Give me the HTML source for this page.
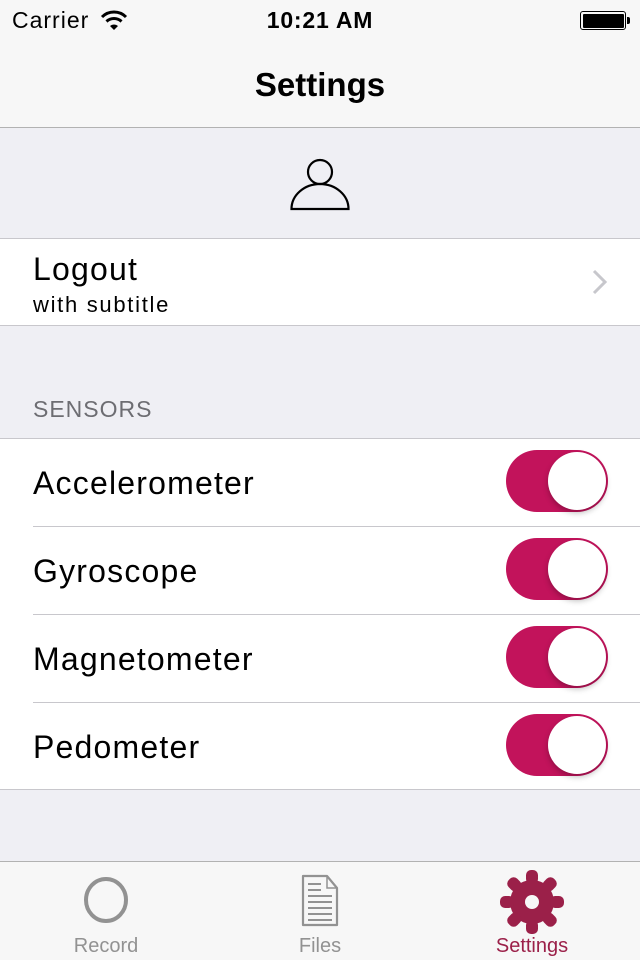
<!DOCTYPE html>
<html><head><meta charset="utf-8"><style>
*{margin:0;padding:0;box-sizing:border-box}
body{width:640px;height:960px;background:#efeff4;font-family:"Liberation Sans",sans-serif;position:relative;overflow:hidden;color:#000}
.abs{position:absolute}
.nav{left:0;top:0;width:640px;height:128px;background:#f7f7f7;border-bottom:1px solid #b2b2b2}
.row{left:0;width:640px;background:#fff}
.lbl{position:absolute;left:33px;font-size:32px;letter-spacing:1.2px}
.sep{position:absolute;left:33px;right:0;height:1px;background:#c8c7cc}
.sw{position:absolute;left:506px;width:102px;height:62px;border-radius:31px;background:#c2135b}
.sw:after{content:"";position:absolute;right:2px;top:2px;width:58px;height:58px;border-radius:50%;background:#fff;box-shadow:0 3px 6px rgba(0,0,0,.25)}
</style></head><body>
<div class="abs nav"></div>
<div class="abs" style="left:12px;top:7px;font-size:23px;letter-spacing:1px">Carrier</div>
<svg class="abs" style="left:100px;top:10px" width="28" height="20" viewBox="0 0 28 20"><path d="M2 7 A17 17 0 0 1 26 7" stroke="#000" stroke-width="3" fill="none"/><path d="M6.5 11.5 A11 11 0 0 1 21.5 11.5" stroke="#000" stroke-width="3" fill="none"/><path d="M10 16 L14 20 L18 16 A6 6 0 0 0 10 16Z" fill="#000"/></svg>
<div class="abs" style="left:0;width:640px;text-align:center;top:7px;font-size:23px;font-weight:bold;letter-spacing:0.8px">10:21 AM</div>
<div class="abs" style="left:580px;top:11px;width:46px;height:19px;border:1.5px solid #000;border-radius:3px;padding:1.5px"><div style="width:100%;height:100%;background:#000;border-radius:1px"></div></div>
<div class="abs" style="left:627px;top:17px;width:3px;height:7px;background:#000;border-radius:0 2px 2px 0"></div>
<div class="abs" style="left:0;width:640px;text-align:center;top:66px;font-size:33px;font-weight:bold">Settings</div>

<svg class="abs" style="left:285px;top:150px" width="70" height="65" viewBox="285 150 70 65"><circle cx="320" cy="172" r="12" fill="none" stroke="#000" stroke-width="2.2"/><path d="M291.5 209 A28.5 25 0 0 1 348.5 209 Z" fill="none" stroke="#000" stroke-width="2.2"/></svg>

<div class="abs row" style="top:238px;height:88px;border-top:1px solid #c8c7cc;border-bottom:1px solid #c8c7cc">
<div class="lbl" style="top:12px;font-size:32px">Logout</div>
<div class="lbl" style="top:53px;font-size:22px;letter-spacing:1.7px">with subtitle</div>
<svg class="abs" style="left:592px;top:30px" width="16" height="26"><path d="M2 2 L13 13 L2 24" stroke="#c7c7cc" stroke-width="3" fill="none"/></svg>
</div>

<div class="abs" style="left:33px;top:396px;font-size:23px;color:#6d6d72;letter-spacing:1px">SENSORS</div>

<div class="abs row" style="top:438px;height:352px;border-top:1px solid #c8c7cc;border-bottom:1px solid #c8c7cc">
<div class="lbl" style="top:26px">Accelerometer</div><div class="sw" style="top:11px"></div><div class="sep" style="top:87px"></div>
<div class="lbl" style="top:114px">Gyroscope</div><div class="sw" style="top:99px"></div><div class="sep" style="top:175px"></div>
<div class="lbl" style="top:202px">Magnetometer</div><div class="sw" style="top:187px"></div><div class="sep" style="top:263px"></div>
<div class="lbl" style="top:290px">Pedometer</div><div class="sw" style="top:275px"></div>
</div>

<div class="abs" style="left:0;top:861px;width:640px;height:99px;background:#f7f7f7;border-top:1px solid #b2b2b2"></div>
<svg class="abs" style="left:80px;top:874px" width="52" height="52"><ellipse cx="26" cy="26" rx="20" ry="21" fill="none" stroke="#929292" stroke-width="4"/></svg>
<svg class="abs" style="left:300px;top:874px" width="40" height="54" viewBox="0 0 40 54"><path d="M3 2 H27 L37 14 V51 H3 Z" fill="none" stroke="#929292" stroke-width="2.2" stroke-linejoin="round"/><path d="M27 2 V14 H37" fill="none" stroke="#929292" stroke-width="1.5"/><path d="M8 10h13M8 16h13M8 22h24M8 28h24M8 34h24M8 40h24M8 46h24" stroke="#929292" stroke-width="2"/></svg>
<svg class="abs" style="left:500px;top:870px" width="64" height="64" viewBox="-32 -32 64 64"><g fill="#9b2049"><circle r="22"/><g id="t"><rect x="-6" y="-32" width="12" height="14" rx="5"/></g><use href="#t" transform="rotate(45)"/><use href="#t" transform="rotate(90)"/><use href="#t" transform="rotate(135)"/><use href="#t" transform="rotate(180)"/><use href="#t" transform="rotate(225)"/><use href="#t" transform="rotate(270)"/><use href="#t" transform="rotate(315)"/></g><circle r="7" fill="#f7f7f7"/></svg>
<div class="abs" style="left:56px;width:100px;text-align:center;top:935px;font-size:20px;color:#929292">Record</div>
<div class="abs" style="left:270px;width:100px;text-align:center;top:935px;font-size:20px;color:#929292">Files</div>
<div class="abs" style="left:472px;width:120px;text-align:center;top:935px;font-size:20px;color:#9b2049">Settings</div>
</body></html>
